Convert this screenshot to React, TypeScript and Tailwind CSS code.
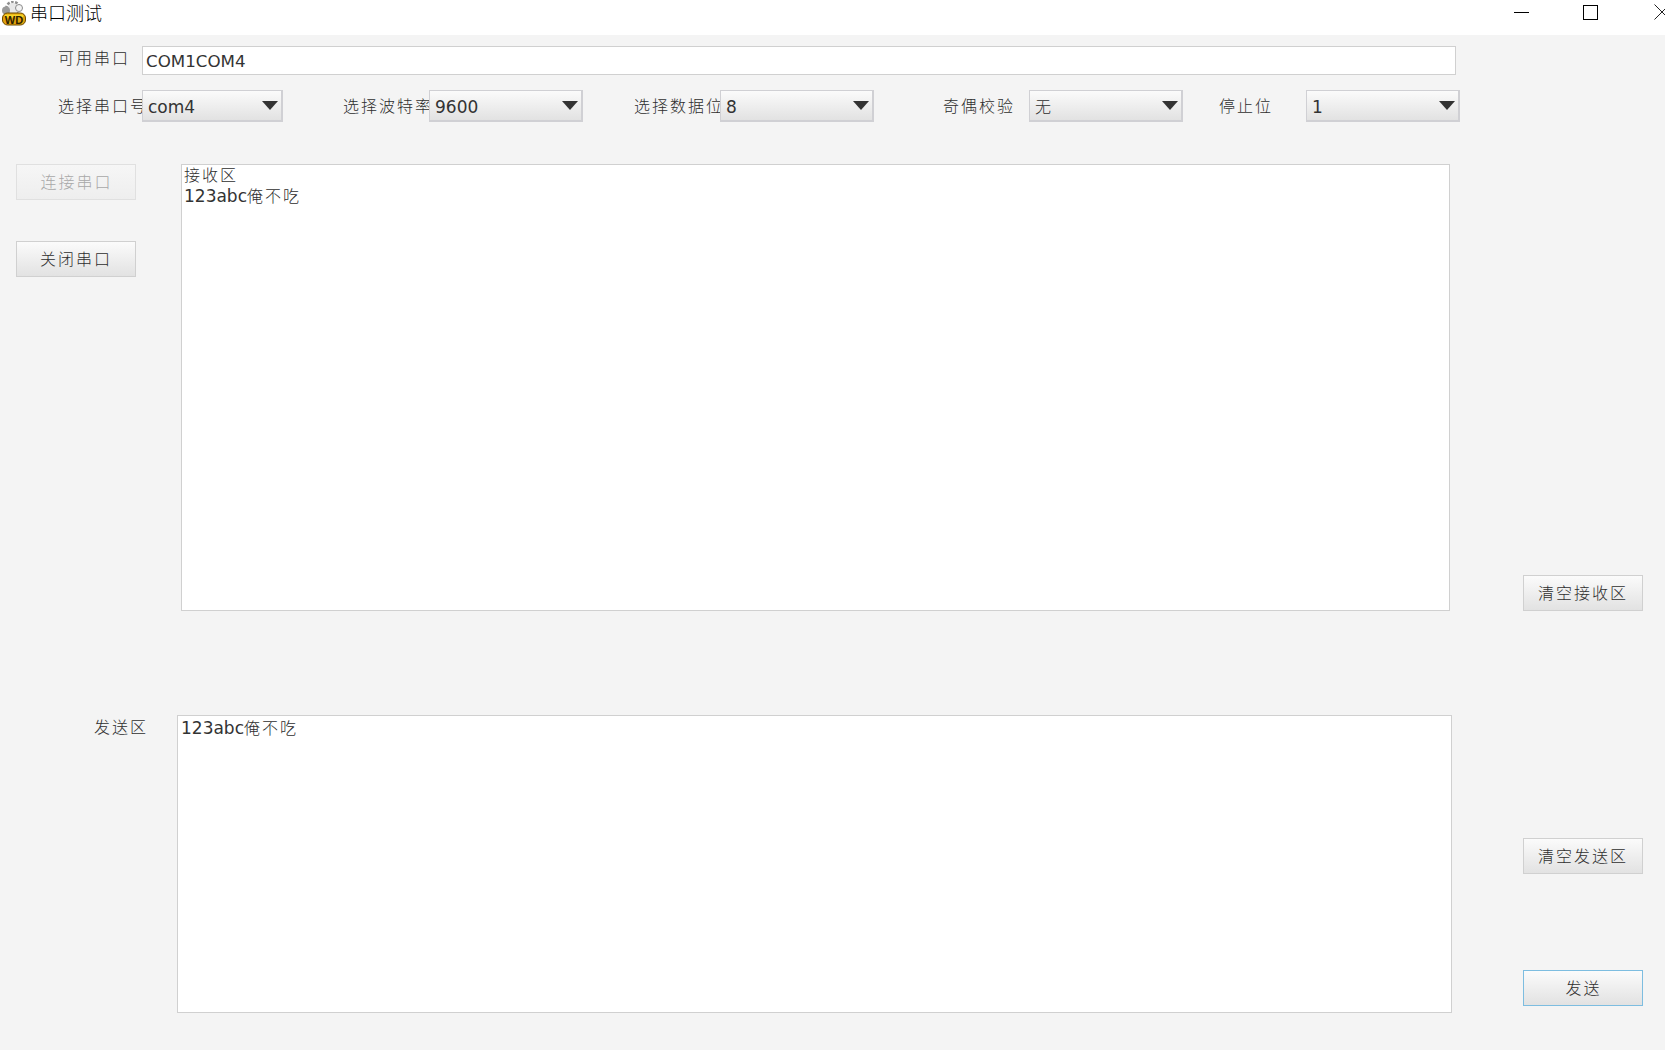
const ui = { fontFamily: '"DejaVu Sans", "Noto Sans CJK SC", sans-serif' };
const cjk = "font-['Noto_Sans_CJK_SC',sans-serif] font-light";

function Label({ text, className }: { text: string; className: string }) {
  return (
    <span className={`shrink-0 text-[16px] tracking-[2px] leading-5 text-[#2e2e2e] whitespace-nowrap ${cjk} ${className}`}>
      {text}
    </span>
  );
}

function Cjk({ children }: { children: string }) {
  return <span className={`text-[16px] tracking-[2px] text-[#2e2e2e] ${cjk}`}>{children}</span>;
}

function Combo({ value, cn = false, className = "w-[154px]" }: { value: string; cn?: boolean; className?: string }) {
  return (
    <div className={`h-8 shrink-0 flex items-center justify-between pl-[5px] pr-[3px] border border-[#d0d0d4] border-r-2 border-b-2 bg-gradient-to-b from-[#fbfbfb] to-[#e2e2e2] ${className}`}>
      <span className="text-[17px] text-[#333333] leading-none mt-[3px]">{cn ? <Cjk>{value}</Cjk> : value}</span>
      <svg width="16" height="9" viewBox="0 0 16 9">
        <path d="M0 0H16L8 9Z" fill="#333333" />
      </svg>
    </div>
  );
}

function Btn({ text, className = "", disabled = false, focus = false }: { text: string; className?: string; disabled?: boolean; focus?: boolean }) {
  return (
    <button
      disabled={disabled}
      className={`h-9 w-[120px] shrink-0 border pb-[2px] text-[16px] tracking-[2px] text-center ${cjk} ${
        focus ? "border-[#7dbde0] pl-px" : disabled ? "border-[#e0e0e0] pl-px" : "border-[#d0d0d0]"
      } ${disabled ? "text-[#a8a8a8] bg-gradient-to-b from-[#f6f6f6] to-[#eeeeee]" : "text-[#2e2e2e] bg-gradient-to-b from-[#fbfbfb] to-[#e2e2e2]"} ${className}`}
    >
      {text}
    </button>
  );
}

function Logo() {
  return (
    <svg width="25" height="25" viewBox="0 0 25 25" className="ml-px shrink-0 -mt-2">
      <circle cx="12" cy="7.5" r="6.5" fill="none" stroke="#8f8f8f" strokeWidth="3" strokeDasharray="2.5 1.5" />
      <circle cx="12" cy="7.5" r="5.5" fill="#e8e8e8" />
      <circle cx="5" cy="9.5" r="4" fill="#9a9a9a" />
      <circle cx="18" cy="7" r="3.5" fill="#f2f2f2" stroke="#8c8c8c" />
      <rect x="1.5" y="12" width="23" height="12" rx="5" fill="#e2a20c" stroke="#6b4a00" strokeWidth="1" />
      <rect x="3.5" y="13.5" width="19" height="3" rx="1.5" fill="#f8d428" />
      <text x="13" y="22.7" textAnchor="middle" fontSize="11" fontWeight="700" fill="#2e2200" fontFamily="Liberation Sans, sans-serif">WD</text>
    </svg>
  );
}

export default function App() {
  return (
    <div className="w-[1665px] h-[1050px] overflow-hidden bg-[#f4f4f4] flex flex-col" style={ui}>
      <div className="h-[35px] shrink-0 bg-white flex items-center">
        <Logo />
        <span className={`ml-1 text-[18px] text-black leading-none -mt-[12px] ${cjk}`}>串口测试</span>
        <div className="ml-auto flex items-center -mt-[11px]">
          <div className="w-[15px] h-px bg-black" />
          <div className="ml-[54px] w-[15px] h-[15px] border border-black" />
          <svg width="11" height="16" viewBox="0 0 11 16" className="ml-[56px]">
            <path d="M0.5 0.5L11 11M0.5 15.5L11 5" stroke="#222" strokeWidth="1" fill="none" />
          </svg>
        </div>
      </div>

      <div className="flex items-center mt-[11px] h-[29px]">
        <Label text="可用串口" className="ml-[58px] w-[84px] -mt-[8px]" />
        <div className="w-[1314px] h-[29px] border border-[#d0d0d0] bg-white flex items-center px-[3px]">
          <span className="text-[16.7px] text-[#333333] leading-none mt-[2px]">COM1COM4</span>
        </div>
      </div>

      <div className="flex items-center mt-[15px] h-8">
        <Label text="选择串口号" className="ml-[58px] w-[84px] -mt-[2px]" />
        <Combo value="com4" className="w-[141px]" />
        <Label text="选择波特率" className="ml-[60px] w-[86px] -mt-[2px]" />
        <Combo value="9600" />
        <Label text="选择数据位" className="ml-[51px] w-[86px] -mt-[2px]" />
        <Combo value="8" />
        <Label text="奇偶校验" className="ml-[69px] w-[86px] -mt-[2px]" />
        <Combo value="无" cn />
        <Label text="停止位" className="ml-[36px] w-[87px] -mt-[2px]" />
        <Combo value="1" />
      </div>

      <div className="flex items-stretch mt-[42px] ml-4 h-[447px]">
        <div className="w-[120px] shrink-0 flex flex-col gap-[41px]">
          <Btn text="连接串口" disabled />
          <Btn text="关闭串口" />
        </div>
        <div className="ml-[45px] w-[1269px] shrink-0 border border-[#d0d0d0] bg-white px-[2px] text-[17px] leading-[20px] text-[#333333]">
          <div className="-mt-px"><Cjk>接收区</Cjk></div>
          <div>123abc<Cjk>俺不吃</Cjk></div>
        </div>
        <div className="ml-[73px] flex flex-col justify-end">
          <Btn text="清空接收区" />
        </div>
      </div>

      <div className="flex items-stretch mt-[104px] h-[298px]">
        <Label text="发送区" className="ml-[94px] w-[83px] mt-px" />
        <div className="w-[1275px] shrink-0 border border-[#d0d0d0] bg-white px-[3px] pt-px text-[17px] leading-[20px] text-[#333333]">
          123abc<Cjk>俺不吃</Cjk>
        </div>
        <div className="ml-[71px] pt-[123px] flex flex-col gap-[96px]">
          <Btn text="清空发送区" />
          <Btn text="发送" focus />
        </div>
      </div>
    </div>
  );
}
